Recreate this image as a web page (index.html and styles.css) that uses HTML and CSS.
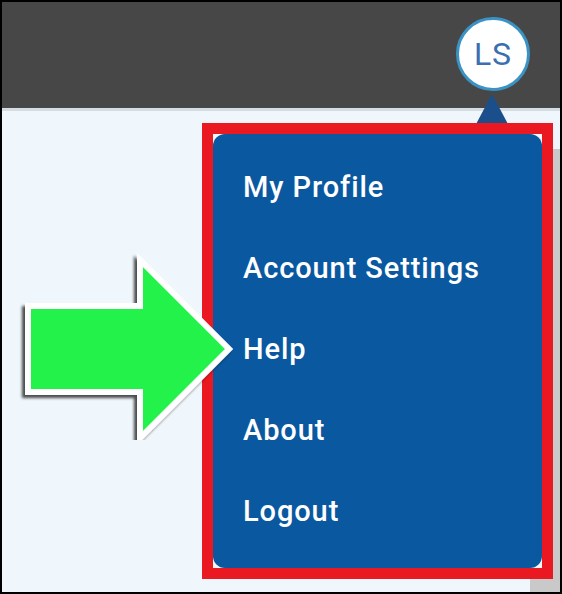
FILE: index.html
```html
<!DOCTYPE html>
<html lang="en">
<head>
  <meta charset="UTF-8" />
  <title>User Menu</title>
  <link rel="stylesheet" href="styles.css">
</head>
<body>

<div class="frame">
  <header class="topbar">
    <div class="avatar">LS</div>
  </header>

  <main class="content">
    <div class="scrollbar"></div>
  </main>

  <!-- dropdown opened from the avatar -->
  <div class="pointer"></div>
  <nav class="menu-box">
    <ul class="menu">
      <li>My Profile</li>
      <li>Account Settings</li>
      <li>Help</li>
      <li>About</li>
      <li>Logout</li>
    </ul>
  </nav>

  <!-- callout arrow pointing at Help -->
  <svg class="callout" width="240" height="200" viewBox="0 0 240 200">
    <defs>
      <filter id="shade" x="-10%" y="-10%" width="120%" height="120%">
        <feGaussianBlur in="SourceAlpha" stdDeviation="1.5"/>
        <feOffset dx="-3" dy="3"/>
        <feComponentTransfer><feFuncA type="linear" slope="0.7"/></feComponentTransfer>
        <feMerge><feMergeNode/><feMergeNode in="SourceGraphic"/></feMerge>
      </filter>
    </defs>
    <polygon filter="url(#shade)" points="28,66 140,66 140,20 229,109 140,198 140,152 28,152"
      fill="#22f24a" stroke="#fff" stroke-width="6" stroke-linejoin="miter"/>
  </svg>
</div>

</body>
</html>
```

FILE: styles.css
```css
* {
  box-sizing: border-box;
}

body {
  margin: 0;
  font-family: Roboto, "Liberation Sans", sans-serif;
  background: #fff;
}

.frame {
  position: relative;
  width: 562px;
  height: 594px;
  border: 2px solid #000;
  overflow: hidden;
  display: flex;
  flex-direction: column;
}

.topbar {
  height: 109px;
  background: #474747;
  border-bottom: 3px solid #d6dde2;
  display: flex;
  justify-content: flex-end;
  align-items: flex-start;
  padding: 15px 30px 0 0;
}

.avatar {
  width: 74px;
  height: 74px;
  border-radius: 50%;
  background: #fff;
  border: 3px solid #3a93c4;
  color: #3b6fb0;
  font-size: 32px;
  display: flex;
  align-items: center;
  justify-content: center;
  letter-spacing: 1px;
}

.content {
  flex: 1;
  background: #eff6fc;
  position: relative;
}

.scrollbar {
  position: absolute;
  left: 528px;
  top: 38px;
  width: 31px;
  bottom: 0;
  background: #c9c9c9;
}

.pointer {
  position: absolute;
  left: 473px;
  top: 92px;
  width: 0;
  height: 0;
  border-left: 17px solid transparent;
  border-right: 17px solid transparent;
  border-bottom: 32px solid #1b4f8c;
}

.menu-box {
  position: absolute;
  left: 200px;
  top: 121px;
  width: 351px;
  height: 456px;
  border: 11px solid #ea1820;
  background: #f4f8fb;
}

.menu {
  list-style: none;
  margin: 0;
  height: 100%;
  background: #0a58a0;
  border-radius: 12px;
  padding: 13px 0 0 30px;
}

.menu li {
  height: 81px;
  line-height: 81px;
  color: #fff;
  font-size: 29px;
  font-weight: 500;
  letter-spacing: 0.9px;
}

.callout {
  position: absolute;
  left: -2px;
  top: 238px;
}
```
